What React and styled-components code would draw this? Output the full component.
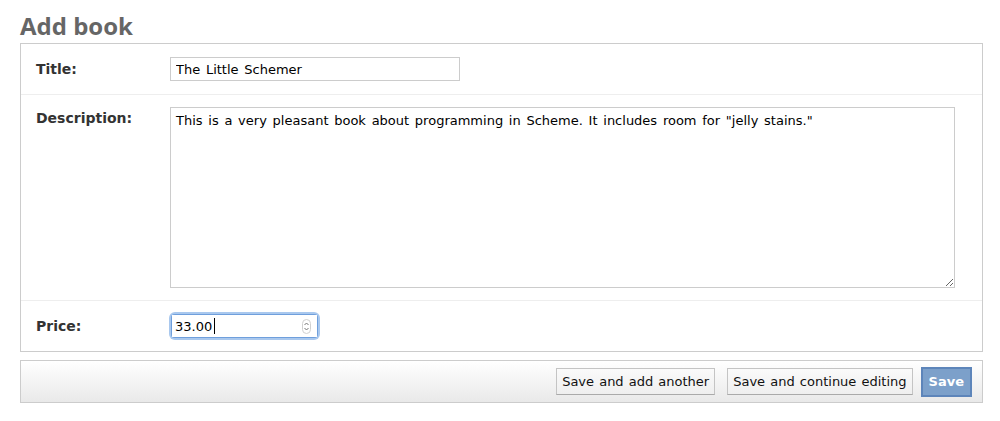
import React from 'react';
import styled, { createGlobalStyle } from 'styled-components';

const GlobalStyle = createGlobalStyle`
  body {
    margin: 0;
    background: #fff;
    font-family: "DejaVu Sans", "Liberation Sans", sans-serif;
    font-size: 13px;
    word-spacing: 1.6px;
    color: #333;
  }
`;

const Page = styled.div`
  width: 963px;
  padding: 11px 0 0 20px;
`;

const Heading = styled.h1`
  margin: 0 0 2px;
  font-family: "Open Sans", "DejaVu Sans", sans-serif;
  font-weight: 700;
  font-size: 24px;
  line-height: 30px;
  word-spacing: 0;
  color: #666;
`;

const Fieldset = styled.div`
  border: 1px solid #ccc;
`;

const Row = styled.div`
  display: flex;
  align-items: ${(p) => (p.$top ? 'flex-start' : 'center')};
  padding: ${(p) => p.$pad || '13px'} 27px ${(p) => p.$pad || '13px'} 15px;
  border-top: ${(p) => (p.$first ? 'none' : '1px solid #eee')};
`;

const Label = styled.label`
  width: 134px;
  flex-shrink: 0;
  font-weight: 700;
  font-size: 14px;
  color: #333;
  line-height: 16px;
  padding-top: ${(p) => (p.$top ? '3px' : '0')};
`;

const TextInput = styled.input`
  box-sizing: border-box;
  width: ${(p) => p.$width}px;
  height: 24px;
  margin: 0;
  padding: 2px 5px;
  border: 1px solid #ccc;
  font-family: inherit;
  font-size: 13px;
  word-spacing: inherit;
  color: #000;
  outline: none;
`;

const PriceWrap = styled.div`
  position: relative;
  width: 145px;
  height: 22px;
  margin-left: 2px;
  border-radius: 3px;
  box-shadow: 0 0 0 1px #6f9fdc, 0 0 0 3px #a9c8ee;
`;

const PriceInput = styled.input`
  box-sizing: border-box;
  width: 100%;
  height: 100%;
  margin: 0;
  padding: 1px 3px;
  border: none;
  background: #fff;
  font-family: inherit;
  font-size: 13px;
  color: #000;
  outline: none;
`;

const Caret = styled.span`
  position: absolute;
  left: 42px;
  top: 3px;
  width: 1px;
  height: 16px;
  background: #000;
`;

const Stepper = styled.svg`
  position: absolute;
  right: 6px;
  top: 4px;
`;

const TextArea = styled.textarea`
  box-sizing: border-box;
  width: 785px;
  height: 181px;
  margin: 0;
  padding: 5px 5px;
  border: 1px solid #ccc;
  font-family: inherit;
  font-size: 13px;
  word-spacing: inherit;
  line-height: 16px;
  color: #000;
  resize: both;
  outline: none;
`;

const SubmitRow = styled.div`
  display: flex;
  justify-content: flex-end;
  align-items: center;
  gap: 12px;
  margin-top: 8px;
  height: 41px;
  padding: 0 10px 0 0;
  border: 1px solid #ccc;
  background: linear-gradient(#fff, #e9e9e9);
`;

const Button = styled.button`
  box-sizing: border-box;
  height: 27px;
  margin: 0;
  padding: 0 5px;
  border: 1px solid #c4c4c4;
  border-bottom-color: #aaa;
  background: linear-gradient(#fafafa, #efefef);
  font-family: inherit;
  font-size: 13px;
  word-spacing: 1px;
  color: #111;
`;

const SaveButton = styled(Button)`
  height: 30px;
  margin-left: -4px;
  padding: 0 6px;
  border: 2px solid #5d85ba;
  background: #7ca0ca;
  color: #fff;
  font-weight: 700;
`;

export default function App() {
  return (
    <Page>
      <GlobalStyle />
      <Heading>Add book</Heading>
      <Fieldset>
        <Row $first>
          <Label>Title:</Label>
          <TextInput $width={290} defaultValue="The Little Schemer" />
        </Row>
        <Row $top $pad="12px">
          <Label $top>Description:</Label>
          <TextArea defaultValue={'This is a very pleasant book about programming in Scheme. It includes room for "jelly stains."'} />
        </Row>
        <Row $pad="14px">
          <Label>Price:</Label>
          <PriceWrap>
            <PriceInput defaultValue="33.00" />
            <Caret />
            <Stepper width="9" height="15" viewBox="0 0 9 15">
              <rect x="0.5" y="0.5" width="8" height="14" rx="4" fill="#fff" stroke="#d0d0d0" />
              <path d="M2.5 6 L4.5 4 L6.5 6 M2.5 9 L4.5 11 L6.5 9" fill="none" stroke="#777" strokeWidth="1" />
            </Stepper>
          </PriceWrap>
        </Row>
      </Fieldset>
      <SubmitRow>
        <Button>Save and add another</Button>
        <Button>Save and continue editing</Button>
        <SaveButton>Save</SaveButton>
      </SubmitRow>
    </Page>
  );
}
